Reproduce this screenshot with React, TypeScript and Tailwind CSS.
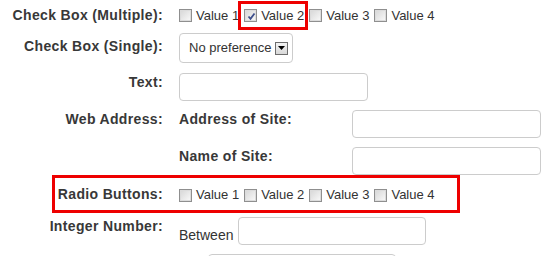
import React from "react";

const VALUES = ["Value 1", "Value 2", "Value 3", "Value 4"];

function Box({ checked = false }: { checked?: boolean }) {
  return (
    <span className="relative inline-flex h-[13px] w-[13px] shrink-0 items-center justify-center border border-[#8f8f8f] bg-white">
      <span className="h-[11px] w-[11px] border border-[#dcdcdc] bg-gradient-to-br from-[#d9d9d9] to-[#f7f7f7]" />
      {checked && (
        <svg className="absolute left-[1px] top-[1px]" width="11" height="11" viewBox="0 0 11 11">
          <path d="M2.5 5.5 L4.5 7.8 L8.5 2.5" fill="none" stroke="#3d4f8c" strokeWidth="1.8" />
        </svg>
      )}
    </span>
  );
}

function Checks({ checked }: { checked?: number }) {
  return (
    <div className="flex items-center gap-[5px] text-[13px]">
      {VALUES.map((v, i) => (
        <label key={v} className="flex items-center gap-[4px]">
          <Box checked={checked === i} />
          <span>{v}</span>
        </label>
      ))}
    </div>
  );
}

function Label({ children }: { children: React.ReactNode }) {
  return (
    <div className="w-[163px] shrink-0 text-right text-[14px] font-bold leading-[18px] tracking-[0.35px] text-[#383838]">
      {children}
    </div>
  );
}

function Field({ width }: { width: string }) {
  return <div className={`h-[28px] shrink-0 rounded-[4px] border border-[#cccccc] bg-white ${width}`} />;
}

export default function App() {
  return (
    <div className="relative h-[256px] w-[548px] overflow-hidden bg-white font-['Liberation_Sans',Arial,sans-serif] text-[#333]">
      <div className="flex flex-col">
        {/* Check Box (Multiple) */}
        <div className="flex h-[30px] items-center gap-[16px]">
          <Label>Check Box (Multiple):</Label>
          <div className="pt-[1px]">
            <Checks checked={1} />
          </div>
        </div>

        {/* Check Box (Single) */}
        <div className="mt-[3px] flex items-start gap-[16px]">
          <div className="pt-[4px]">
            <Label>Check Box (Single):</Label>
          </div>
          <div className="flex h-[30px] w-[114px] items-center justify-between rounded-[4px] border border-[#cccccc] pl-[9px] pr-[4px] text-[13px]">
            <span>No preference</span>
            <span className="flex h-[13px] w-[13px] items-center justify-center border border-[#6d6d6d] bg-gradient-to-b from-[#f4f4f4] to-[#d8d8d8]">
              <svg width="7" height="4" viewBox="0 0 7 4">
                <path d="M0 0 H7 L3.5 4 Z" fill="#000" />
              </svg>
            </span>
          </div>
        </div>

        {/* Text */}
        <div className="mt-[10px] flex items-start gap-[16px]">
          <Label>Text:</Label>
          <Field width="w-[189px]" />
        </div>

        {/* Web Address */}
        <div className="mt-[9px] flex items-start gap-[16px]">
          <Label>Web Address:</Label>
          <div className="flex flex-col gap-[9px]">
            <div className="flex items-start">
              <div className="w-[173px] text-[14px] font-bold leading-[18px] tracking-[0.35px] text-[#383838]">Address of Site:</div>
              <Field width="w-[189px]" />
            </div>
            <div className="flex items-start">
              <div className="w-[173px] text-[14px] font-bold leading-[18px] tracking-[0.35px] text-[#383838]">Name of Site:</div>
              <Field width="w-[189px]" />
            </div>
          </div>
        </div>

        {/* Radio Buttons */}
        <div className="flex h-[38px] items-center gap-[16px]">
          <Label>Radio Buttons:</Label>
          <div className="pt-[2px]">
            <Checks />
          </div>
        </div>

        {/* Integer Number */}
        <div className="mt-[4px] flex items-start gap-[16px]">
          <Label>Integer Number:</Label>
          <div className="flex flex-col gap-[9px]">
            <div className="flex items-end gap-[5px]">
              <span className="mb-[1px] text-[14px] leading-[18px]">Between</span>
              <Field width="w-[188px]" />
            </div>
            <div className="flex items-end gap-[5px]">
              <span className="w-[24px]" />
              <Field width="w-[188px]" />
            </div>
          </div>
        </div>
      </div>

      {/* Annotation boxes */}
      <div className="pointer-events-none absolute left-[238px] top-[1px] h-[29px] w-[70px] border-[3px] border-[#ee0000]" />
      <div className="pointer-events-none absolute left-[52px] top-[175px] h-[38px] w-[408px] border-[3px] border-[#ee0000]" />
    </div>
  );
}
